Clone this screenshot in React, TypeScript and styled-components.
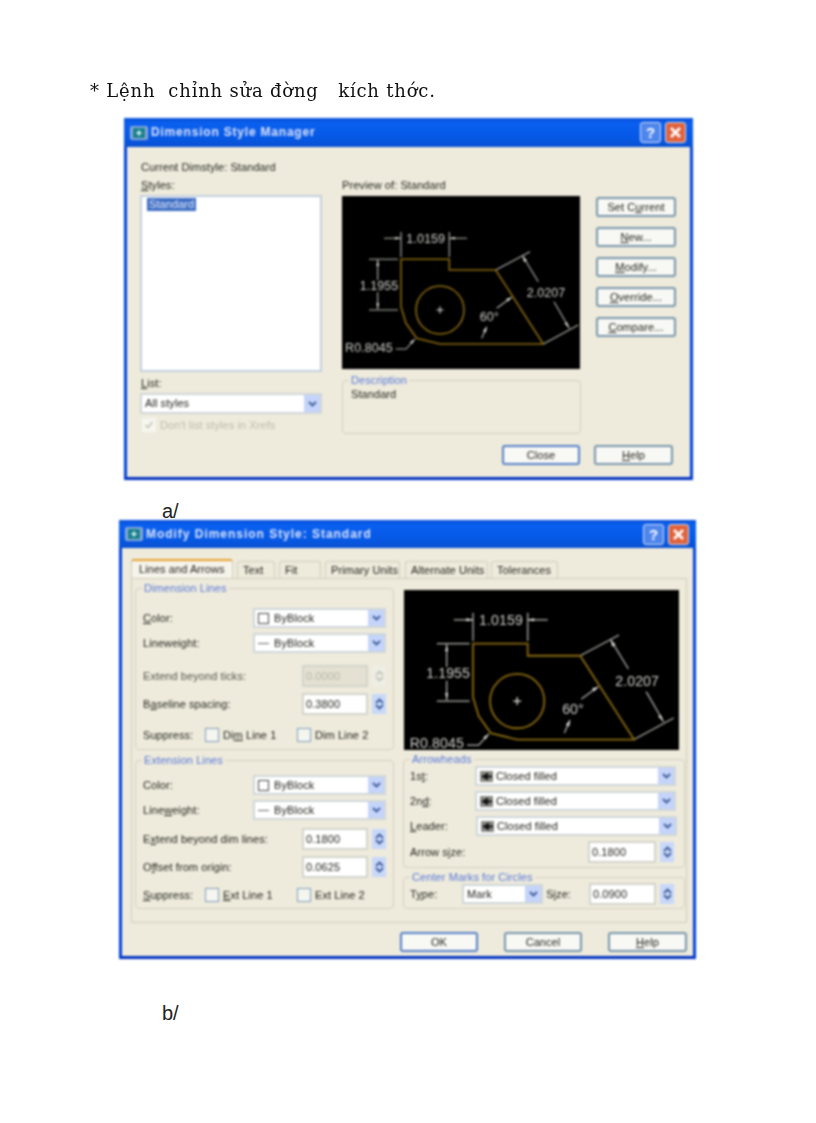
import React from "react";
import styled, { createGlobalStyle } from "styled-components";

const GlobalStyle = createGlobalStyle`
  html, body {
    margin: 0;
    padding: 0;
    background: #fff;
  }
  * {
    box-sizing: border-box;
  }
`;

const Page = styled.div`
  width: 816px;
  height: 1123px;
  overflow: hidden;
  padding-top: 79px;
  background: #fff;
  font-family: "Liberation Sans", Arial, sans-serif;
`;

const Heading = styled.h1`
  margin: 0 0 0 90px;
  font-family: "DejaVu Serif", "Liberation Serif", serif;
  font-size: 18px;
  font-weight: 400;
  line-height: 24px;
  letter-spacing: 0.8px;
  white-space: pre;
  color: #101010;
  filter: blur(0.5px);
`;

const Caption = styled.div<{ $top: number }>`
  margin: ${({ $top }) => $top}px 0 0 162px;
  height: 19px;
  font-size: 20px;
  line-height: 20px;
  color: #222;
`;

const Dialog = styled.section<{ $x: number; $w: number; $h: number; $top?: number }>`
  margin: ${({ $top }) => $top ?? 0}px 0 0 ${({ $x }) => $x}px;
  width: ${({ $w }) => $w}px;
  height: ${({ $h }) => $h}px;
  display: flex;
  flex-direction: column;
  background: #eeebdc;
  border: 3px solid #0042dc;
  border-top: 0;
  border-bottom-color: #0030c0;
  font-size: 11px;
  line-height: 13px;
  letter-spacing: 0.08px;
  color: #24231e;
  filter: blur(0.8px);
`;

const TitleBar = styled.header<{ $h: number }>`
  flex: none;
  height: ${({ $h }) => $h}px;
  margin: 0 -3px;
  padding: 0 7px 0 6px;
  display: flex;
  align-items: center;
  gap: 3px;
  background: linear-gradient(#0a4fd8, #0a60f0 18%, #0658e4 70%, #0a50d0);
`;

const TitleText = styled.h2<{ $spacing: number }>`
  flex: 1;
  margin: 0;
  font-size: 12px;
  font-weight: 700;
  letter-spacing: ${({ $spacing }) => $spacing}px;
  color: #dde4fa;
`;

const CaptionButton = styled.div<{ $close?: boolean }>`
  width: 21px;
  height: 21px;
  margin-left: 1px;
  display: flex;
  align-items: center;
  justify-content: center;
  border: 1px solid #d8e2f8;
  border-radius: 3px;
  background: ${({ $close }) => ($close ? "#e0623c" : "#4f86ec")};
  color: #fff;
  font-size: 15px;
  font-weight: 700;
`;

const ManagerBody = styled.div`
  flex: 1;
  padding: 14px 17px 0 13px;
`;

const Line = styled.div<{ $top?: number; $left?: number }>`
  margin: ${({ $top }) => $top ?? 0}px 0 0 ${({ $left }) => $left ?? 1}px;
  white-space: nowrap;
`;

const ManagerGrid = styled.div`
  display: grid;
  grid-template-columns: 182px 259px 95px;
`;

const ManagerLeft = styled.div`
  width: 182px;
`;

const ManagerMiddle = styled.div`
  width: 239px;
  margin-left: 20px;
`;

const ManagerButtons = styled.div`
  margin: 23px 0 0 15px;
  display: flex;
  flex-direction: column;
  gap: 10px;
`;

const ListBox = styled.div`
  margin-top: 3px;
  height: 177px;
  padding: 1px 5px;
  background: #fff;
  border: 2px solid #c3cfdc;
`;

const SelectedItem = styled.span`
  display: inline-block;
  padding: 0 2px;
  background: #3d6dc4;
  color: #e4ebfa;
`;

const Preview = styled.div<{ $w: number; $h: number; $top: number; $left?: number }>`
  margin: ${({ $top }) => $top}px 0 0 ${({ $left }) => $left ?? 0}px;
  width: ${({ $w }) => $w}px;
  height: ${({ $h }) => $h}px;
  background: #000;
  overflow: hidden;

  svg {
    display: block;
    width: 100%;
    height: 100%;
  }
`;

const Group = styled.fieldset<{ $top?: number; $h?: number; $pb?: number }>`
  margin: ${({ $top }) => $top ?? 0}px 0 0;
  padding: 0 0 ${({ $pb }) => $pb ?? 0}px;
  min-width: 0;
  height: ${({ $h }) => ($h ? `${$h}px` : "auto")};
  border: 1px solid #d4d1c0;
  border-radius: 4px;
`;

const Legend = styled.legend`
  margin-left: 6px;
  padding: 0 2px;
  font-size: 11px;
  line-height: 13px;
  color: #5878d8;
`;

const Footer = styled.footer<{ $pad: string; $gap: number }>`
  display: flex;
  justify-content: flex-end;
  gap: ${({ $gap }) => $gap}px;
  padding: ${({ $pad }) => $pad};
`;

const PushButton = styled.div<{ $w?: number; $main?: boolean }>`
  width: ${({ $w }) => $w ?? 80}px;
  height: 20px;
  display: flex;
  align-items: center;
  justify-content: center;
  background: #f8f8f4;
  border: 2px solid ${({ $main }) => ($main ? "#5580c8" : "#7895aa")};
  border-radius: 3px;
  white-space: nowrap;
`;

const Key = styled.span`
  text-decoration: underline;
`;

const Combo = styled.div<{ $w: number; $h?: number; $top?: number }>`
  flex: none;
  width: ${({ $w }) => $w}px;
  height: ${({ $h }) => $h ?? 20}px;
  margin-top: ${({ $top }) => $top ?? 0}px;
  display: flex;
  align-items: stretch;
  background: #fff;
  border: 2px solid #d0d6d8;
`;

const ComboValue = styled.div<{ $gap?: number }>`
  flex: 1;
  display: flex;
  align-items: center;
  gap: ${({ $gap }) => $gap ?? 5}px;
  padding-left: 3px;
  white-space: nowrap;
`;

const ArrowButton = styled.div`
  flex: none;
  width: 16px;
  display: flex;
  align-items: center;
  justify-content: center;
  background: #c4d4fa;
  color: #3d5a96;
`;

const Swatch = styled.span`
  width: 11px;
  height: 11px;
  background: #fff;
  border: 1px solid #444;
`;

const Dash = styled.span`
  width: 11px;
  height: 1px;
  background: #666;
`;

const Row = styled.div<{ $top?: number; $left?: number; $h?: number }>`
  height: ${({ $h }) => $h ?? 20}px;
  margin-top: ${({ $top }) => $top ?? 0}px;
  padding-left: ${({ $left }) => $left ?? 7}px;
  display: flex;
  align-items: center;
`;

const RowLabel = styled.span<{ $w: number; $muted?: boolean }>`
  flex: none;
  width: ${({ $w }) => $w}px;
  white-space: nowrap;
  color: ${({ $muted }) => ($muted ? "#55544a" : "inherit")};
`;

const NumberInput = styled.div<{ $w?: number; $disabled?: boolean }>`
  flex: none;
  width: ${({ $w }) => $w ?? 66}px;
  height: 22px;
  display: flex;
  align-items: center;
  padding-left: 2px;
  background: ${({ $disabled }) => ($disabled ? "#e4e1d2" : "#fff")};
  border: 2px solid #d4d4cc;
  color: ${({ $disabled }) => ($disabled ? "#b8b6a8" : "inherit")};
`;

const Spinner = styled.div<{ $disabled?: boolean }>`
  flex: none;
  width: 14px;
  height: 20px;
  margin-left: 4px;
  display: flex;
  flex-direction: column;
  align-items: center;
  justify-content: center;
  background: ${({ $disabled }) => ($disabled ? "#eeeee6" : "#c8d8fa")};
  color: ${({ $disabled }) => ($disabled ? "#c4c4bc" : "#3d5a96")};
`;

const CheckBox = styled.span<{ $disabled?: boolean }>`
  flex: none;
  width: 14px;
  height: 14px;
  display: inline-flex;
  align-items: center;
  justify-content: center;
  background: #f6f6f0;
  border: ${({ $disabled }) => ($disabled ? "0" : "1.5px solid #7f9cb8")};
  color: #c4c2b4;
`;

const CheckText = styled.span<{ $w: number; $muted?: boolean }>`
  flex: none;
  width: ${({ $w }) => $w}px;
  padding-left: 4px;
  white-space: nowrap;
  color: ${({ $muted }) => ($muted ? "#bdbbac" : "inherit")};
`;

const ModifyBody = styled.div`
  flex: 1;
  padding: 11px 6px 0 9px;
`;

const Tabs = styled.nav`
  height: 19px;
  display: flex;
  align-items: flex-end;
`;

const Tab = styled.div<{ $w: number; $gap?: number; $active?: boolean }>`
  flex: none;
  width: ${({ $w }) => $w}px;
  height: ${({ $active }) => ($active ? 19 : 17)}px;
  margin-right: ${({ $gap }) => $gap ?? 4}px;
  padding-left: ${({ $active }) => ($active ? 7 : 5)}px;
  display: flex;
  align-items: center;
  background: ${({ $active }) => ($active ? "#f6f4ea" : "#eeebdc")};
  border: 1px solid #d0cdbc;
  border-bottom: 0;
  border-top: ${({ $active }) => ($active ? "2px solid #e8a030" : "1px solid #d0cdbc")};
  border-radius: 3px 3px 0 0;
  white-space: nowrap;
`;

const TabPanel = styled.div`
  height: 345px;
  padding: 3px 1px 0 3px;
  display: grid;
  grid-template-columns: 259px 282px;
  column-gap: 9px;
  align-items: start;
  background: #eeebdc;
  border: 1px solid #cfccba;
`;

const Column = styled.div`
  display: flex;
  flex-direction: column;
`;

const ArrowMark = () => (
  <svg width="13" height="11" viewBox="0 0 13 11">
    <rect width="13" height="11" fill="#8a8a84" />
    <path d="M1 5.5 8 1.5V4.5H12V6.5H8V9.5Z" fill="#111" />
  </svg>
);

const Chevron = ({ up }: { up?: boolean }) => (
  <svg width="9" height="6" viewBox="0 0 9 6">
    <path
      d={up ? "M1 5 4.5 1.5 8 5" : "M1 1 4.5 4.5 8 1"}
      fill="none"
      stroke="currentColor"
      strokeWidth="1.8"
    />
  </svg>
);

const SpinButtons = ({ disabled }: { disabled?: boolean }) => (
  <Spinner $disabled={disabled}>
    <Chevron up />
    <Chevron />
  </Spinner>
);

const AppIcon = () => (
  <svg width="18" height="14" viewBox="0 0 18 14">
    <rect width="18" height="14" rx="2" fill="#8aa8d8" />
    <rect x="3" y="2" width="12" height="10" fill="#15808c" />
    <path d="M9 3.5 10 6 12.5 7 10 8 9 10.5 8 8 5.5 7 8 6Z" fill="#e8f4f4" />
  </svg>
);

const CloseGlyph = () => (
  <svg width="13" height="13" viewBox="0 0 13 13">
    <path d="M2 2 11 11M11 2 2 11" stroke="#fff" strokeWidth="2.6" />
  </svg>
);

const WindowTitle = ({ text, h, spacing }: { text: string; h: number; spacing: number }) => (
  <TitleBar $h={h}>
    <AppIcon />
    <TitleText $spacing={spacing}>{text}</TitleText>
    <CaptionButton>?</CaptionButton>
    <CaptionButton $close>
      <CloseGlyph />
    </CaptionButton>
  </TitleBar>
);

// same part drawing in both dialogs, only the viewBox differs
const PartDrawing = ({ viewBox }: { viewBox: string }) => (
  <svg viewBox={viewBox} preserveAspectRatio="none">
    <g fill="none" stroke="#b8b8b4" strokeWidth="1.1">
      <path d="M59 36V61M107.3 36V61" />
      <path d="M42 42.3H59M107.3 42.3H125" />
      <path d="M27 63.3H56M27 114H56" />
      <path d="M35.7 64V84M35.7 96V113" />
      <path d="M153.7 74 188 55.7M201.3 148 236.3 129" />
      <path d="M180.7 60 196.3 85.7M212 105.7 227.3 132.3" />
      <path d="M154.7 112.3 169.7 101.3M139.7 142.3 144.7 130.7" />
      <path d="M53.7 153H64L73 143" />
      <path d="M94.5 114H101.5M98 110.5V117.5" stroke="#e8e8e4" />
    </g>
    <g fill="#e0e0dc">
      <path d="M59 42.3 53 41V43.6ZM107.3 42.3 113 41V43.6Z" />
      <path d="M35.7 64 34.4 70H37ZM35.7 113 34.4 107H37Z" />
      <path d="M180.7 60 182 66 185 64.4ZM227.3 132.3 222.5 127.5 225 126Z" />
      <path d="M169.7 101.3 164 103 166 105.6ZM144.7 130.7 141 135 144 136.4ZM73 143 68 146 70 148Z" />
    </g>
    <g fill="none" stroke="#8a6a10" strokeWidth="1.6">
      <path d="M59 63.3H107.3V74H153.7L201.3 148H98L74.7 142.3 64 127.3 59 110.7Z" />
      <circle cx="98" cy="114" r="24" />
    </g>
    <g
      fill="#cfcfcb"
      fontFamily="Liberation Sans, Arial, sans-serif"
      fontSize="12.5"
      textAnchor="middle"
    >
      <text x="83.7" y="47">1.0159</text>
      <text x="37" y="94">1.1955</text>
      <text x="204" y="101">2.0207</text>
      <text x="147.3" y="125">60°</text>
      <text x="27" y="155.5">R0.8045</text>
    </g>
  </svg>
);

const ClosedFilled = () => (
  <ComboValue $gap={3}>
    <ArrowMark />
    Closed filled
  </ComboValue>
);

export default function App() {
  return (
    <Page>
      <GlobalStyle />
      <Heading>{"* Lệnh  chỉnh sửa đờng   kích thớc."}</Heading>

      <Dialog $x={124} $w={569} $h={362} $top={15}>
        <WindowTitle text="Dimension Style Manager" h={29} spacing={0.8} />
        <ManagerBody>
          <Line>Current Dimstyle: Standard</Line>
          <ManagerGrid>
            <ManagerLeft>
              <Line $top={5}>
                <Key>S</Key>tyles:
              </Line>
              <ListBox>
                <SelectedItem>Standard</SelectedItem>
              </ListBox>
              <Line $top={5}>
                <Key>L</Key>ist:
              </Line>
              <Combo $w={182} $h={21} $top={3}>
                <ComboValue>All styles</ComboValue>
                <ArrowButton>
                  <Chevron />
                </ArrowButton>
              </Combo>
              <Row $top={4} $left={2} $h={14}>
                <CheckBox $disabled>
                  <svg width="10" height="10" viewBox="0 0 10 10">
                    <path d="M1.5 5 4 7.5 8.5 2" fill="none" stroke="currentColor" strokeWidth="1.6" />
                  </svg>
                </CheckBox>
                <CheckText $w={160} $muted>
                  Don't list styles in Xrefs
                </CheckText>
              </Row>
            </ManagerLeft>

            <ManagerMiddle>
              <Line $top={5} $left={0}>Preview of: Standard</Line>
              <Preview $w={238} $h={173} $top={4}>
                <PartDrawing viewBox="0 0 238 173" />
              </Preview>
              <Group $top={5} $h={60}>
                <Legend>Description</Legend>
                <Line $left={8} $top={1}>Standard</Line>
              </Group>
            </ManagerMiddle>

            <ManagerButtons>
              <PushButton>
                Set C<Key>u</Key>rrent
              </PushButton>
              <PushButton>
                <Key>N</Key>ew...
              </PushButton>
              <PushButton>
                <Key>M</Key>odify...
              </PushButton>
              <PushButton>
                <Key>O</Key>verride...
              </PushButton>
              <PushButton>
                <Key>C</Key>ompare...
              </PushButton>
            </ManagerButtons>
          </ManagerGrid>
          <Footer $pad="11px 0 0" $gap={14}>
            <PushButton $w={78} $main>
              Close
            </PushButton>
            <PushButton $w={79}>
              <Key>H</Key>elp
            </PushButton>
          </Footer>
        </ManagerBody>
      </Dialog>

      <Caption $top={21}>a/</Caption>

      <Dialog $x={119} $w={577} $h={439}>
        <WindowTitle text="Modify Dimension Style: Standard" h={28} spacing={0.97} />
        <ModifyBody>
          <Tabs>
            <Tab $w={102} $active>
              Lines and Arrows
            </Tab>
            <Tab $w={38}>Text</Tab>
            <Tab $w={42}>Fit</Tab>
            <Tab $w={75} $gap={5}>
              Primary Units
            </Tab>
            <Tab $w={83} $gap={3}>
              Alternate Units
            </Tab>
            <Tab $w={67}>Tolerances</Tab>
          </Tabs>
          <TabPanel>
            <Column>
              <Group $pb={4}>
                <Legend>Dimension Lines</Legend>
                <Row $top={13}>
                  <RowLabel $w={110}>
                    <Key>C</Key>olor:
                  </RowLabel>
                  <Combo $w={133}>
                    <ComboValue>
                      <Swatch />
                      ByBlock
                    </ComboValue>
                    <ArrowButton>
                      <Chevron />
                    </ArrowButton>
                  </Combo>
                </Row>
                <Row $top={5}>
                  <RowLabel $w={110}>Lineweight:</RowLabel>
                  <Combo $w={133}>
                    <ComboValue>
                      <Dash />
                      ByBlock
                    </ComboValue>
                    <ArrowButton>
                      <Chevron />
                    </ArrowButton>
                  </Combo>
                </Row>
                <Row $top={13}>
                  <RowLabel $w={159} $muted>
                    Extend beyond ticks:
                  </RowLabel>
                  <NumberInput $disabled>0.0000</NumberInput>
                  <SpinButtons disabled />
                </Row>
                <Row $top={8}>
                  <RowLabel $w={159}>
                    B<Key>a</Key>seline spacing:
                  </RowLabel>
                  <NumberInput>0.3800</NumberInput>
                  <SpinButtons />
                </Row>
                <Row $top={11}>
                  <RowLabel $w={62}>Suppress:</RowLabel>
                  <CheckBox />
                  <CheckText $w={78}>
                    Di<Key>m</Key> Line 1
                  </CheckText>
                  <CheckBox />
                  <CheckText $w={70}>Dim Line 2</CheckText>
                </Row>
              </Group>

              <Group $top={4} $pb={3}>
                <Legend>Extension Lines</Legend>
                <Row $top={8}>
                  <RowLabel $w={110}>Color:</RowLabel>
                  <Combo $w={133}>
                    <ComboValue>
                      <Swatch />
                      ByBlock
                    </ComboValue>
                    <ArrowButton>
                      <Chevron />
                    </ArrowButton>
                  </Combo>
                </Row>
                <Row $top={5}>
                  <RowLabel $w={110}>
                    Line<Key>w</Key>eight:
                  </RowLabel>
                  <Combo $w={133}>
                    <ComboValue>
                      <Dash />
                      ByBlock
                    </ComboValue>
                    <ArrowButton>
                      <Chevron />
                    </ArrowButton>
                  </Combo>
                </Row>
                <Row $top={9}>
                  <RowLabel $w={159}>
                    E<Key>x</Key>tend beyond dim lines:
                  </RowLabel>
                  <NumberInput>0.1800</NumberInput>
                  <SpinButtons />
                </Row>
                <Row $top={8}>
                  <RowLabel $w={159}>
                    O<Key>f</Key>fset from origin:
                  </RowLabel>
                  <NumberInput>0.0625</NumberInput>
                  <SpinButtons />
                </Row>
                <Row $top={8}>
                  <RowLabel $w={62}>
                    <Key>S</Key>uppress:
                  </RowLabel>
                  <CheckBox />
                  <CheckText $w={78}>
                    <Key>E</Key>xt Line 1
                  </CheckText>
                  <CheckBox />
                  <CheckText $w={70}>Ext Line 2</CheckText>
                </Row>
              </Group>
            </Column>

            <Column>
              <Preview $w={275} $h={160} $top={8} $left={1}>
                <PartDrawing viewBox="-2 16 243 141.2" />
              </Preview>
              <Group $top={3} $pb={5}>
                <Legend>Arrowheads</Legend>
                <Row $left={6}>
                  <RowLabel $w={65}>
                    1s<Key>t</Key>:
                  </RowLabel>
                  <Combo $w={201}>
                    <ClosedFilled />
                    <ArrowButton>
                      <Chevron />
                    </ArrowButton>
                  </Combo>
                </Row>
                <Row $top={5} $left={6}>
                  <RowLabel $w={65}>
                    2n<Key>d</Key>:
                  </RowLabel>
                  <Combo $w={201}>
                    <ClosedFilled />
                    <ArrowButton>
                      <Chevron />
                    </ArrowButton>
                  </Combo>
                </Row>
                <Row $top={5} $left={6}>
                  <RowLabel $w={66}>
                    <Key>L</Key>eader:
                  </RowLabel>
                  <Combo $w={201}>
                    <ClosedFilled />
                    <ArrowButton>
                      <Chevron />
                    </ArrowButton>
                  </Combo>
                </Row>
                <Row $top={6} $left={6}>
                  <RowLabel $w={178}>
                    Arrow s<Key>i</Key>ze:
                  </RowLabel>
                  <NumberInput $w={68}>0.1800</NumberInput>
                  <SpinButtons />
                </Row>
              </Group>
              <Group $top={3} $pb={4}>
                <Legend>Center Marks for Circles</Legend>
                <Row $left={6}>
                  <RowLabel $w={52}>
                    T<Key>y</Key>pe:
                  </RowLabel>
                  <Combo $w={81}>
                    <ComboValue>Mark</ComboValue>
                    <ArrowButton>
                      <Chevron />
                    </ArrowButton>
                  </Combo>
                  <RowLabel $w={46}>
                    &nbsp;S<Key>i</Key>ze:
                  </RowLabel>
                  <NumberInput $w={67}>0.0900</NumberInput>
                  <SpinButtons />
                </Row>
              </Group>
            </Column>
          </TabPanel>
          <Footer $pad="9px 0 0" $gap={26}>
            <PushButton $w={78} $main>
              OK
            </PushButton>
            <PushButton $w={78}>Cancel</PushButton>
            <PushButton $w={79}>
              <Key>H</Key>elp
            </PushButton>
          </Footer>
        </ModifyBody>
      </Dialog>

      <Caption $top={44}>b/</Caption>
    </Page>
  );
}
